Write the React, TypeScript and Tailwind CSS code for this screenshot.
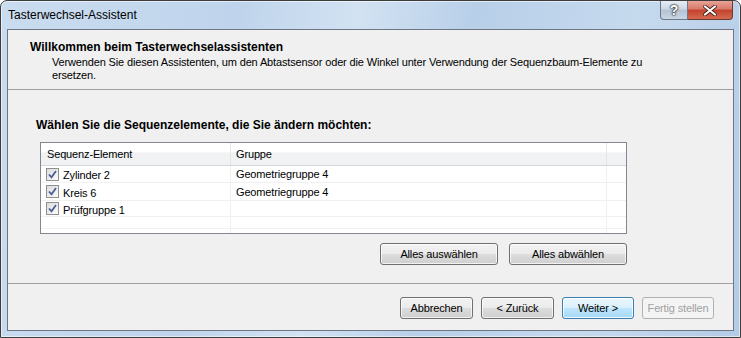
import React from "react";

const btn =
  "h-[22px] rounded-[3px] border border-[#707070] bg-[linear-gradient(#f2f2f2_0%,#ebebeb_50%,#dddddd_50%,#cfcfcf_100%)] text-black flex items-center justify-center shadow-[inset_0_0_0_1px_rgba(255,255,255,0.7)]";

const rows = [
  { name: "Zylinder 2", group: "Geometriegruppe 4", h: "h-[17px]" },
  { name: "Kreis 6", group: "Geometriegruppe 4", h: "h-[18px]" },
  { name: "Prüfgruppe 1", group: "", h: "h-[16px]" },
];

function Check() {
  return (
    <div className="w-[13px] h-[13px] border border-[#8e8f8f] bg-[linear-gradient(135deg,#dcdcdc,#fbfbfb)] flex items-center justify-center shrink-0">
      <svg width="11" height="11" viewBox="0 0 11 11">
        <path d="M2 5.5 L4.5 8.3 L9 2" fill="none" stroke="#4a5f97" strokeWidth="1.8" />
      </svg>
    </div>
  );
}

export default function App() {
  return (
    <div className="w-[741px] h-[338px] font-['Liberation_Sans',Arial,sans-serif] text-[11px] tracking-[-0.15px] text-black">
      <div className="w-full h-full flex flex-col border border-[#3d3d3d] rounded-t-[7px] bg-[linear-gradient(100deg,#cadcef_0%,#bfd4ec_30%,#d2e2f2_45%,#b8cfe9_60%,#c6daee_80%,#b4cbe6_100%)] shadow-[inset_0_0_0_1px_rgba(255,255,255,0.55)]">
        {/* Title bar */}
        <div className="h-[28px] flex items-start shrink-0">
          <div className="pl-[7px] pt-[6px] leading-[16px] text-[12px] tracking-normal text-black">Tasterwechsel-Assistent</div>
          <div className="ml-auto mr-[7px] flex">
            <div className="w-[28px] h-[19px] rounded-bl-[4px] border border-t-0 border-[#6d7785] bg-[linear-gradient(#e6edf5_0%,#cdd8e5_45%,#b4c2d3_50%,#c9d6e4_100%)] flex items-center justify-center text-white font-bold text-[14px] leading-none [text-shadow:0_0_1px_#222,0_0_2px_#222,0_0_2px_#333]">
              ?
            </div>
            <div className="w-[45px] h-[19px] rounded-br-[4px] border border-t-0 border-l-0 border-[#6d3a32] bg-[linear-gradient(#e8a496_0%,#d8786a_45%,#c4412c_50%,#d36a4f_100%)] flex items-center justify-center">
              <svg width="14" height="11" viewBox="0 0 14 11">
                <path d="M2 1.5 L12 9.5 M12 1.5 L2 9.5" stroke="#3b1a15" strokeWidth="3.6" strokeLinecap="round" />
                <path d="M2 1.5 L12 9.5 M12 1.5 L2 9.5" stroke="#ffffff" strokeWidth="2.2" strokeLinecap="round" />
              </svg>
            </div>
          </div>
        </div>

        {/* Client area */}
        <div className="mx-[6px] mb-[6px] flex-1 flex flex-col border border-[#6c7684] bg-[#f0f0f0]">
          {/* Header */}
          <div className="h-[60px] shrink-0 border-b border-[#a0a0a0] pl-[22px] pt-[9px]">
            <div className="font-bold text-[12px] tracking-normal leading-[16px]">Willkommen beim Tasterwechselassistenten</div>
            <div className="pl-[22px] leading-[13px] pt-[1px]">
              Verwenden Sie diesen Assistenten, um den Abtastsensor oder die Winkel unter Verwendung der Sequenzbaum-Elemente zu
              <br />
              ersetzen.
            </div>
          </div>

          {/* Body */}
          <div className="h-[194px] shrink-0 border-b border-[#a0a0a0] pl-[28px] pt-[27px]">
            <div className="font-bold text-[12px] tracking-normal leading-[16px]">Wählen Sie die Sequenzelemente, die Sie ändern möchten:</div>
            <div className="ml-[4px] mt-[9px] w-[587px] h-[92px] border border-[#828790] bg-white overflow-hidden">
              <div className="h-[23px] flex border-b border-[#d5d5d5] bg-[linear-gradient(#ffffff_0%,#ffffff_40%,#f1f2f4_45%,#f1f2f4_100%)]">
                <div className="w-[190px] border-r border-[#e3e4e6] pl-[6px] flex items-center">Sequenz-Element</div>
                <div className="w-[376px] border-r border-[#e3e4e6] pl-[5px] flex items-center">Gruppe</div>
                <div className="flex-1" />
              </div>
              {rows.map((r) => (
                <div key={r.name} className={`${r.h} flex border-b border-[#f0f0f0]`}>
                  <div className="w-[190px] border-r border-[#f0f0f0] pl-[5px] flex items-center gap-[4px]">
                    <Check />
                    <span className="leading-[14px] pt-[2px]">{r.name}</span>
                  </div>
                  <div className="w-[376px] border-r border-[#f0f0f0] pl-[5px] flex items-center leading-[14px]">{r.group}</div>
                  <div className="flex-1" />
                </div>
              ))}
              <div className="h-[12px] flex border-b border-[#f0f0f0]">
                <div className="w-[190px] border-r border-[#f0f0f0]" />
                <div className="w-[376px] border-r border-[#f0f0f0]" />
              </div>
              <div className="h-[8px] flex">
                <div className="w-[190px] border-r border-[#f0f0f0]" />
                <div className="w-[376px] border-r border-[#f0f0f0]" />
              </div>
            </div>
            <div className="mt-[9px] w-[591px] flex justify-end gap-[11px]">
              <div className={`${btn} w-[118px]`}>Alles auswählen</div>
              <div className={`${btn} w-[118px]`}>Alles abwählen</div>
            </div>
          </div>

          {/* Footer */}
          <div className="flex-1 flex justify-end items-start pt-[13px] pr-[19px] gap-[8px]">
            <div className={`${btn} w-[73px]`}>Abbrechen</div>
            <div className={`${btn} w-[73px]`}>&lt; Zurück</div>
            <div className="h-[22px] w-[72px] rounded-[3px] border border-[#3c7fb1] bg-[linear-gradient(#eaf6fd_0%,#d9f0fc_50%,#bee6fd_50%,#a7d9f5_100%)] shadow-[inset_0_0_0_1px_rgba(255,255,255,0.8)] flex items-center justify-center">
              Weiter &gt;
            </div>
            <div className="h-[22px] w-[72px] rounded-[3px] border border-[#adb2b5] bg-[#f4f4f4] text-[#a0a0a0] flex items-center justify-center">
              Fertig stellen
            </div>
          </div>
        </div>
      </div>
    </div>
  );
}
